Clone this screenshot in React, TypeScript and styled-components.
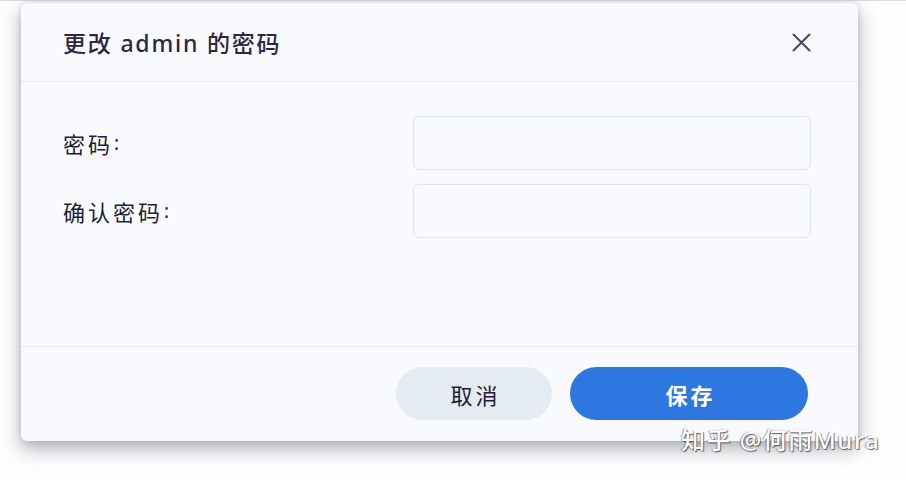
import React from "react";
import styled, { createGlobalStyle } from "styled-components";

const Global = createGlobalStyle`
  html, body { margin: 0; padding: 0; background: #fcfdfe; }
  body {
    font-family: "Noto Sans", "Noto Sans CJK SC", sans-serif;
    width: 906px; height: 480px; overflow: hidden;
  }
`;

const Page = styled.div`
  position: relative;
  width: 906px;
  height: 480px;
  padding: 3px 0 0 21px;
  box-sizing: border-box;
  border-top: 1px solid #d9dcdf;
`;

const Dialog = styled.div`
  width: 837px;
  height: 438px;
  margin-top: -1px;
  background: #f8fafd;
  border-radius: 6px;
  box-shadow: 0 8px 18px rgba(40, 44, 56, 0.35), 0 0 6px rgba(40, 44, 56, 0.15);
  display: flex;
  flex-direction: column;
  overflow: hidden;
`;

const Header = styled.div`
  height: 79px;
  flex: none;
  display: flex;
  align-items: center;
  justify-content: space-between;
  padding: 0 46px 0 42px;
  border-bottom: 1px solid #e5eaef;
  box-sizing: border-box;
`;

const Title = styled.h1`
  margin: 0;
  font-size: 23px;
  font-weight: 500;
  letter-spacing: 1.8px;
  color: #2d2740;
`;

const CloseButton = styled.button`
  width: 22px;
  height: 22px;
  border: none;
  background: transparent;
  padding: 0;
  display: flex;
  align-items: center;
  justify-content: center;
  cursor: pointer;
`;

const Body = styled.div`
  flex: 1;
  display: grid;
  grid-template-columns: 1fr 398px;
  grid-auto-rows: 54px;
  row-gap: 14px;
  align-content: start;
  padding: 34px 47px 0 42px;
`;

const Label = styled.label`
  display: flex;
  align-items: center;
  font-size: 22px;
  letter-spacing: 3px;
  color: #221d33;
`;

const Colon = styled.span`
  margin-left: 1px;
  font-family: "Noto Sans", sans-serif;
  font-size: 19px;
`;

const Input = styled.input`
  box-sizing: border-box;
  width: 100%;
  height: 54px;
  border: 1px solid #dfe5ec;
  border-radius: 6px;
  background: #f8fafd;
  outline: none;
  font-size: 18px;
`;

const Footer = styled.div`
  height: 95px;
  flex: none;
  border-top: 1px solid #e5eaef;
  display: flex;
  justify-content: flex-end;
  align-items: center;
  gap: 18px;
  padding: 0 50px 1px 0;
  box-sizing: border-box;
`;

const Button = styled.button<{ $primary?: boolean; $w: number }>`
  width: ${(p) => p.$w}px;
  height: 53px;
  border: none;
  border-radius: 27px;
  font-family: "Noto Sans", "Noto Sans CJK SC", sans-serif;
  font-size: 22px;
  letter-spacing: 3px;
  text-indent: 3px;
  font-weight: ${(p) => (p.$primary ? 700 : 400)};
  background: ${(p) => (p.$primary ? "#2e76e0" : "#e5ebf2")};
  color: ${(p) => (p.$primary ? "#ffffff" : "#221d33")};
  cursor: pointer;
`;

const Watermark = styled.div`
  position: absolute;
  left: 681px;
  top: 420px;
  font-size: 24px;
  font-weight: 500;
  color: #ffffff;
  letter-spacing: 1.5px;
  text-shadow: 1px 1px 1px rgba(60, 60, 70, 0.8), -1px 0 1px rgba(60, 60, 70, 0.5);
  white-space: nowrap;
`;

export default function App() {
  return (
    <>
      <Global />
      <Page>
        <Dialog>
          <Header>
            <Title>更改 admin 的密码</Title>
            <CloseButton aria-label="关闭">
              <svg width="19" height="19" viewBox="0 0 19 19">
                <path d="M1.5 1.5 L17.5 17.5 M17.5 1.5 L1.5 17.5" stroke="#4a4560" strokeWidth="2" strokeLinecap="round" />
              </svg>
            </CloseButton>
          </Header>
          <Body>
            <Label>密码<Colon>:</Colon></Label>
            <Input type="password" />
            <Label>确认密码<Colon>:</Colon></Label>
            <Input type="password" />
          </Body>
          <Footer>
            <Button $w={156}>取消</Button>
            <Button $primary $w={238}>保存</Button>
          </Footer>
        </Dialog>
        <Watermark>知乎 @何雨Mura</Watermark>
      </Page>
    </>
  );
}
